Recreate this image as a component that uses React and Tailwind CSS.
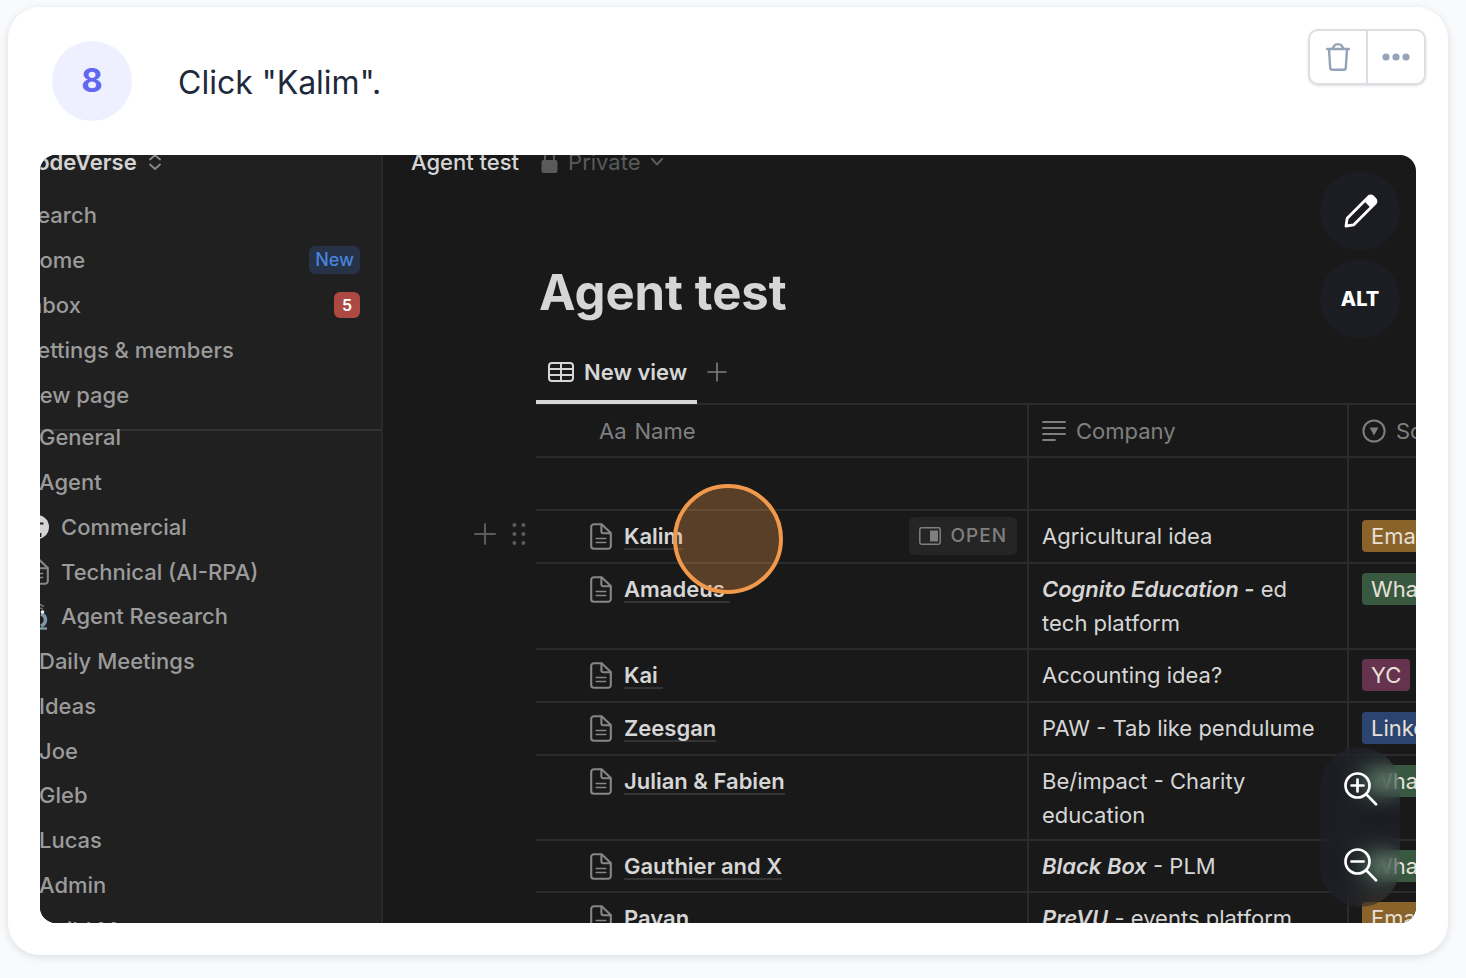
import React from "react";

const PageIcon = () => (
  <svg viewBox="0 0 22 27" className="h-[27px] w-[22px] shrink-0 text-[#868686]" fill="none" stroke="currentColor" strokeWidth="2.1" strokeLinejoin="round" strokeLinecap="round" aria-hidden="true">
    <path d="M4 1.2h7.6L20.8 10v13a2.8 2.8 0 0 1-2.8 2.8H4A2.8 2.8 0 0 1 1.2 23V4A2.8 2.8 0 0 1 4 1.2Z" />
    <path d="M11.4 1.6v6.6a2 2 0 0 0 2 2h7" />
    <path d="M6.2 15.6h9.6M6.2 19.6h9.6" strokeWidth="1.5" />
  </svg>
);

const Globe = () => (
  <svg viewBox="0 0 24 24" className="h-6 w-6" aria-hidden="true">
    <circle cx="12" cy="12" r="12" fill="#d4d4d4" />
    <path d="M10 8.5h8.5M15.5 22v-4" stroke="#202020" strokeWidth="1.8" />
  </svg>
);

const Microscope = () => (
  <svg viewBox="0 0 24 30" className="h-[30px] w-6" fill="none" aria-hidden="true">
    <path d="m14 3 5 2.5M15 7l3 1" stroke="#6f6f6f" strokeWidth="1.6" />
    <path d="M16 13c6 2 6 9 0 12" stroke="#7d98a8" strokeWidth="3.5" />
    <circle cx="17.5" cy="11" r="1.8" fill="#f0f0f0" />
    <path d="M8 27.5h14" stroke="#7d98a8" strokeWidth="2.4" />
  </svg>
);

const topLinks = [
  { label: "Search" },
  { label: "Home", badge: "New" },
  { label: "Inbox", count: "5" },
  { label: "Settings & members" },
  { label: "New page" },
];

const pages = [
  { label: "General" },
  { label: "Agent" },
  { label: "Commercial", icon: <Globe /> },
  { label: "Technical (AI-RPA)", icon: <PageIcon /> },
  { label: "Agent Research", icon: <Microscope /> },
  { label: "Daily Meetings" },
  { label: "Ideas" },
  { label: "Joe" },
  { label: "Gleb" },
  { label: "Lucas" },
  { label: "Admin" },
  { label: "Build Manager" },
];

const rows = [
  { name: "Kalim", company: "Agricultural idea", tag: "Email", color: "bg-[#89632a]", height: "h-[53px]", active: true },
  {
    name: "Amadeus\u00a0",
    company: (<><b className="font-semibold"><i>Cognito Education</i> -</b> ed tech platform</>),
    tag: "WhatsApp", color: "bg-[#38593f]", height: "h-[86px]",
  },
  { name: "Kai\u00a0", company: "Accounting idea?", tag: "YC", color: "bg-[#66334f]", height: "h-[53px]" },
  { name: "Zeesgan", company: "PAW - Tab like pendulume", tag: "LinkedIn", color: "bg-[#2c4470]", height: "h-[53px]" },
  { name: "Julian & Fabien", company: "Be/impact - Charity education", tag: "WhatsApp", color: "bg-[#38593f]", height: "h-[85px]" },
  { name: "Gauthier and X", company: (<><b className="font-semibold italic">Black Box</b> - PLM</>), tag: "WhatsApp", color: "bg-[#38593f]", height: "h-[52px]" },
  { name: "Pavan", company: (<><b className="font-semibold italic">PreVU</b> - events platform</>), tag: "Email", color: "bg-[#89632a]", height: "h-[53px]" },
];

function Sidebar() {
  return (
    <aside className="w-[343px] shrink-0 border-r-2 border-[#292929] bg-[#202020] font-medium text-[#9b9b9b]">
      <button className="-mt-[23px] -ml-5 flex h-[60px] items-center gap-3 font-semibold text-[#d4d4d4]">
        CodeVerse
        <svg viewBox="0 0 12 16" className="h-4 w-3 text-[#8a8a8a]" fill="none" stroke="currentColor" strokeWidth="1.8" strokeLinecap="round" strokeLinejoin="round" aria-hidden="true">
          <path d="m1 5.5 5-4.5 5 4.5M1 10.5 6 15l5-4.5" />
        </svg>
      </button>
      <ul className="mt-px grid h-56 auto-rows-fr">
        {topLinks.map((l) => (
          <li key={l.label}>
            <a href="#" className="-ml-[17px] flex h-full items-center justify-between pr-[21px]">
              {l.label}
              {l.badge && <span className="rounded-md bg-[#253247] px-1.5 text-lg leading-7 text-[#4a83dc]">{l.badge}</span>}
              {l.count && <span className="rounded-md bg-[#ac4a42] px-2 text-base leading-[26px] font-semibold text-white">{l.count}</span>}
            </a>
          </li>
        ))}
      </ul>
      <ul className="relative -mt-0.5 grid h-[537px] auto-rows-fr before:absolute before:inset-x-0 before:top-3.5 before:h-0.5 before:bg-[#323232]">
        {pages.map((p) => (
          <li key={p.label} className="relative">
            {p.icon ? (
              <a href="#" className="-ml-[15px] flex h-full items-center gap-3">
                <span className="flex w-6 shrink-0 justify-end">{p.icon}</span>
                {p.label}
              </a>
            ) : (
              <a href="#" className="-ml-px flex h-full items-center">{p.label}</a>
            )}
          </li>
        ))}
      </ul>
    </aside>
  );
}

function RowHandles() {
  return (
    <div className="absolute top-3 right-full flex items-center gap-4 pr-2.5 text-[#5c5c5c]">
      <button aria-label="Add row">
        <svg viewBox="0 0 22 22" className="size-[22px]" stroke="currentColor" strokeWidth="2" strokeLinecap="round"><path d="M11 1v20M1 11h20" /></svg>
      </button>
      <button aria-label="Drag row">
        <svg viewBox="0 0 14 22" className="h-[22px] w-3.5" fill="currentColor">
          <circle cx="2.4" cy="2" r="2" /><circle cx="11.4" cy="2" r="2" />
          <circle cx="2.4" cy="11" r="2" /><circle cx="11.4" cy="11" r="2" />
          <circle cx="2.4" cy="20" r="2" /><circle cx="11.4" cy="20" r="2" />
        </svg>
      </button>
    </div>
  );
}

function DataTable() {
  const head = "px-[13px] text-left align-middle font-normal text-[#7f7f7f]";
  return (
    <table className="w-[1132px] table-fixed border-separate border-spacing-0 [&_td]:border-t-2 [&_td]:border-[#2b2b2b] [&_td:not(:first-child)]:border-l-2 [&_th]:border-t-2 [&_th]:border-[#2b2b2b] [&_th:not(:first-child)]:border-l-2">
      <colgroup>
        <col className="w-[491px]" />
        <col className="w-[320px]" />
        <col />
      </colgroup>
      <thead>
        <tr className="h-[53px]">
          <th className={head}><span className="flex gap-2 pl-[50px]"><span>Aa</span>Name</span></th>
          <th className={head}>
            <span className="flex items-center gap-2.5">
              <svg viewBox="0 0 24 20" className="h-5 w-6" stroke="currentColor" strokeWidth="1.8" strokeLinecap="round" aria-hidden="true"><path d="M1 1h22M1 7h22M1 13h22M1 19h12" /></svg>
              Company
            </span>
          </th>
          <th className={head}>
            <span className="flex items-center gap-2.5">
              <svg viewBox="0 0 24 24" className="size-6" fill="none" aria-hidden="true"><circle cx="12" cy="12" r="10.6" stroke="currentColor" strokeWidth="2" /><path d="M7.6 8.6h8.8L12 16.6Z" fill="currentColor" /></svg>
              Source
            </span>
          </th>
        </tr>
      </thead>
      <tbody>
        <tr className="h-[53px]"><td /><td /><td /></tr>
        {rows.map((r) => (
          <tr key={r.name} className={"align-top " + r.height}>
            <td className="relative pt-2 pr-2.5 pl-[54px]">
              {r.active && <RowHandles />}
              <div className="flex h-[34px] items-center gap-3">
                <PageIcon />
                <a href="#" className="border-b-2 border-[#333] pt-0.5 leading-6 font-semibold text-[#d6d6d6]">{r.name}</a>
                {r.active && (
                  <button className="ml-auto flex h-[38px] items-center gap-2.5 rounded-md bg-[#252525] px-2.5 text-[19px] font-medium tracking-wider text-[#7f7f7f]">
                    <svg viewBox="0 0 22 18" className="h-[18px] w-[22px]" aria-hidden="true"><rect x="0.8" y="0.8" width="20.4" height="16.4" rx="1.6" fill="none" stroke="currentColor" strokeWidth="1.5" /><path d="M11 3.5h8v11h-8z" fill="currentColor" /></svg>
                    OPEN
                  </button>
                )}
              </div>
              {r.active && <span className="pointer-events-none absolute -top-[27px] left-[137px] z-10 size-[110px] rounded-full border-4 border-[#f0984c] bg-[#f0984c]/30" />}
            </td>
            <td className="pt-2 pr-4 pl-[13px] leading-[34px] text-[#d6d6d6]">{r.company}</td>
            <td className="pt-[9px] pl-[13px]"><span className={"inline-block rounded px-[9px] leading-8 text-[#e6e0d8] " + r.color}>{r.tag}</span></td>
          </tr>
        ))}
      </tbody>
    </table>
  );
}

const Magnifier = ({ plus }) => (
  <svg viewBox="0 0 34 34" className="size-[34px]" fill="none" stroke="currentColor" strokeWidth="2.7" strokeLinecap="round" aria-hidden="true">
    <circle cx="13.5" cy="13.5" r="12" />
    <path d="m22.4 22.4 9.6 9.8" />
    <path d={plus ? "M7.5 13.5h12M13.5 7.5v12" : "M7.5 13.5h12"} />
  </svg>
);

export default function App() {
  return (
    <div className="min-h-screen bg-[#f8fafc] pt-[7px] pr-[18px] pb-[23px] pl-2 font-['Inter',sans-serif]">
      <article className="rounded-[32px] bg-white px-8 pb-8 shadow-[0_2px_8px_rgba(15,23,42,0.12)]">
        <header className="flex h-[148px] items-start pt-[34px] pl-3">
          <span className="flex size-20 shrink-0 items-center justify-center rounded-full bg-[#eef0ff] text-[33px] font-bold text-[#6366f1]">8</span>
          <h1 className="ml-[46px] pt-[18px] text-[32px] leading-12 text-[#1e293b]">Click "Kalim".</h1>
          <div className="-mt-3 -mr-[10px] ml-auto flex h-14 w-[118px] divide-x-2 divide-[#dcdee3] rounded-[10px] border-2 border-[#dcdee3] text-[#94a3b8] shadow-sm">
            <button className="flex flex-1 items-center justify-center" aria-label="Delete">
              <svg viewBox="0 0 24 28" className="h-7 w-6" fill="none" stroke="currentColor" strokeWidth="2.4" strokeLinecap="round" strokeLinejoin="round" aria-hidden="true">
                <path d="M1.2 6h21.6" />
                <path d="M6.6 5.6 8.2 2.8A3 3 0 0 1 10.6 1.4h2.8a3 3 0 0 1 2.4 1.4l1.6 2.8" />
                <path d="m3 6.2 1.2 18.4A2.3 2.3 0 0 0 6.5 26.8h11a2.3 2.3 0 0 0 2.3-2.2L21 6.2" />
              </svg>
            </button>
            <button className="flex flex-1 items-center justify-center" aria-label="More">
              <svg viewBox="0 0 28 8" className="h-2 w-7" fill="currentColor" aria-hidden="true"><circle cx="4" cy="4" r="3.6" /><circle cx="14" cy="4" r="3.6" /><circle cx="24" cy="4" r="3.6" /></svg>
            </button>
          </div>
        </header>

        <section className="relative flex h-[768px] overflow-hidden rounded-2xl bg-[#191919] text-[22px] leading-7">
          <Sidebar />
          <main className="min-w-0 flex-1 overflow-hidden">
            <div className="-mt-[23px] flex h-[60px] items-center pl-7">
              <span className="font-medium text-[#d6d6d6]">Agent test</span>
              <button className="ml-[22px] flex items-center gap-2.5 text-[#5a5a5a]">
                <svg viewBox="0 0 17 22" className="h-[22px] w-[17px]" aria-hidden="true"><rect x="0.5" y="9" width="16" height="13" rx="2" fill="currentColor" /><path d="M4 10V6a4.5 4.5 0 0 1 9 0v4" fill="none" stroke="currentColor" strokeWidth="2" /></svg>
                Private
                <svg viewBox="0 0 12 8" className="h-2 w-3" fill="none" stroke="currentColor" strokeWidth="2" strokeLinecap="round" strokeLinejoin="round" aria-hidden="true"><path d="m1 1 5 5.5L11 1" /></svg>
              </button>
            </div>
            <div className="pl-[153px]">
              <h2 className="pt-[69px] pl-[3px] text-[49px] leading-[64px] font-bold text-[#d6d6d6]">Agent test</h2>
              <div className="mt-[17px] -mb-px flex h-[62px] items-stretch">
                <button className="flex items-center gap-2.5 border-b-4 border-[#d6d6d6] pt-0.5 pr-2.5 pl-3 font-semibold text-[#d6d6d6]">
                  <svg viewBox="0 0 26 20" className="h-5 w-[26px]" fill="none" stroke="currentColor" strokeWidth="2" aria-hidden="true"><rect x="1" y="1" width="24" height="18" rx="3" /><path d="M1 7h24M1 13h24M13 1v18" /></svg>
                  New view
                </button>
                <button className="flex items-center border-b-4 border-transparent px-2.5 pt-0.5 text-[#7f7f7f]" aria-label="Add view">
                  <svg viewBox="0 0 20 20" className="size-5" stroke="currentColor" strokeWidth="1.6"><path d="M10 0.5v19M0.5 10h19" /></svg>
                </button>
              </div>
              <DataTable />
            </div>
          </main>

          <div className="absolute inset-y-4 right-4 flex w-20 flex-col gap-2 text-white">
            <button className="flex size-20 items-center justify-center rounded-full bg-[#1c1d22] pl-0.5" aria-label="Edit">
              <svg viewBox="0 0 34 34" className="size-[34px]" aria-hidden="true">
                <path d="M2 32 3.2 24.2 24.4 3a3.2 3.2 0 0 1 4.6 0l2 2a3.2 3.2 0 0 1 0 4.6L9.8 30.8Z" fill="none" stroke="currentColor" strokeWidth="2.8" strokeLinejoin="round" />
                <path d="m20.6 7.6 4.6-4.8a3 3 0 0 1 4 0l2.2 2.4a3 3 0 0 1 0 4.2l-4.8 4.4Z" fill="currentColor" />
              </svg>
            </button>
            <button className="flex size-20 items-center justify-center rounded-full bg-[#1c1d22] text-xl font-extrabold">ALT</button>
            <div className="mt-auto flex h-40 flex-col rounded-full bg-[#374173]/12 py-1 pl-0.5 backdrop-blur-[10px]">
              <button className="flex flex-1 items-center justify-center" aria-label="Zoom in"><Magnifier plus /></button>
              <button className="flex flex-1 items-center justify-center" aria-label="Zoom out"><Magnifier /></button>
            </div>
          </div>
        </section>
      </article>
    </div>
  );
}
